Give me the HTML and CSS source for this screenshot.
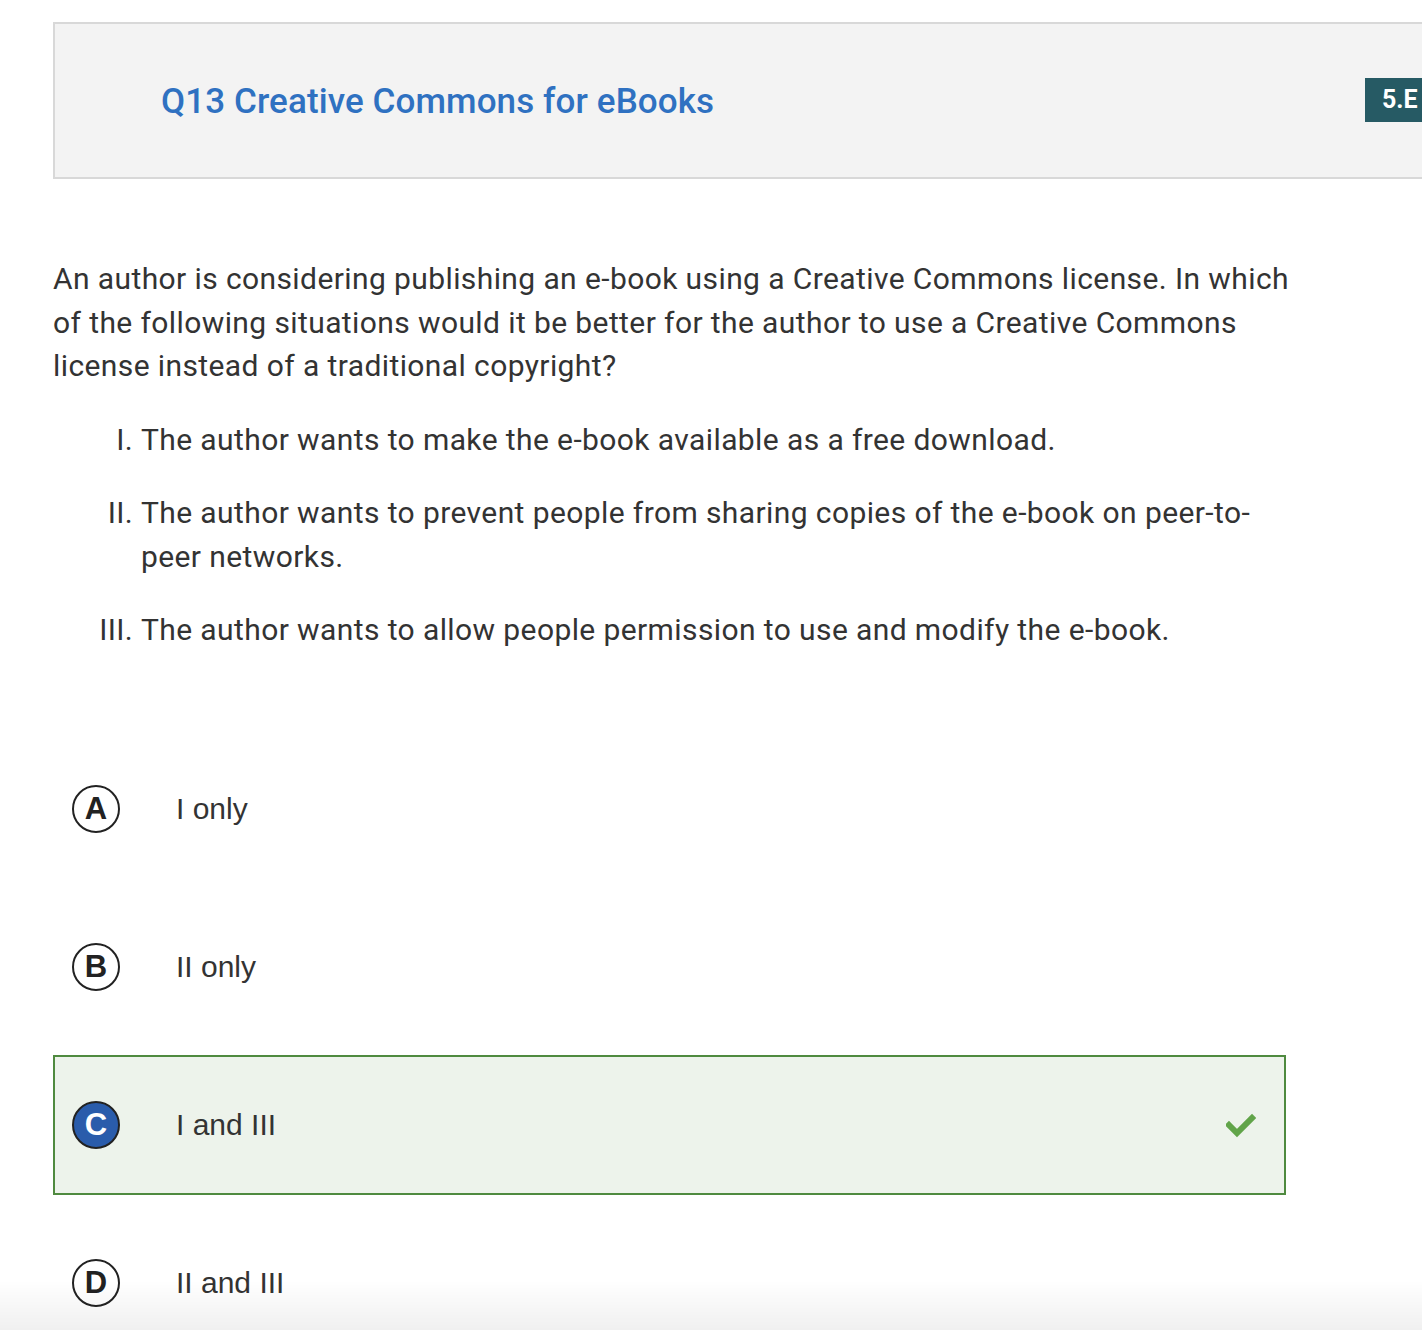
FILE: index.html
```html
<!DOCTYPE html>
<html>
<head>
<meta charset="utf-8">
<link rel="stylesheet" href="styles.css">
</head>
<body>
<div class="page">
  <div class="header">
    <h1 class="title">Q13 Creative Commons for eBooks</h1>
    <span class="badge">5.E</span>
  </div>
  <div class="content">
    <p class="question">An author is considering publishing an e-book using a Creative Commons license. In which of the following situations would it be better for the author to use a Creative Commons license instead of a traditional copyright?</p>
    <ol class="items">
      <li>The author wants to make the e-book available as a free download.</li>
      <li>The author wants to prevent people from sharing copies of the e-book on peer-to-peer networks.</li>
      <li>The author wants to allow people permission to use and modify the e-book.</li>
    </ol>
    <div class="options">
      <div class="option">
        <span class="letter">A</span>
        <span class="opt-text">I only</span>
      </div>
      <div class="option">
        <span class="letter">B</span>
        <span class="opt-text">II only</span>
      </div>
      <div class="option correct">
        <span class="letter filled">C</span>
        <span class="opt-text">I and III</span>
        <svg class="check" width="30" height="26" viewBox="0 0 30 26"><polyline points="3,13 11,21 26,6" fill="none" stroke="#61a449" stroke-width="6" stroke-linecap="square"/></svg>
      </div>
      <div class="option">
        <span class="letter">D</span>
        <span class="opt-text">II and III</span>
      </div>
    </div>
  </div>
</div>
<div class="bottom-fade"></div>
</body>
</html>
```

FILE: styles.css
```css
html, body {
  margin: 0;
  padding: 0;
  background: #ffffff;
  overflow: hidden;
}
body {
  width: 1422px;
  height: 1330px;
  font-family: Roboto, "Liberation Sans", sans-serif;
  color: #333333;
}
.page {
  padding: 22px 0 0 53px;
}
.header {
  width: 1400px;
  height: 153px;
  box-sizing: content-box;
  border: 2px solid #d8d8d8;
  background: #f3f3f3;
  display: flex;
  align-items: center;
  padding: 0;
}
.title {
  margin: 2px 0 0 106px;
  font-family: Roboto, sans-serif;
  font-weight: 500;
  font-size: 35px;
  color: #2f71c1;
  letter-spacing: 0.1px;
}
.badge {
  margin-left: auto;
  margin-right: 10px;
  width: 80px;
  height: 44px;
  margin-top: -2px;
  background: #265a64;
  color: #ffffff;
  font-family: Roboto, sans-serif;
  font-weight: 700;
  font-size: 25px;
  display: flex;
  align-items: center;
  padding-left: 17px;
  box-sizing: border-box;
}
.content {
  width: 1233px;
}
.question {
  width: 1245px;
  margin: 78px 0 0 0;
  font-size: 30px;
  letter-spacing: 0.4px;
  line-height: 43.5px;
}
.items {
  list-style: upper-roman;
  margin: 30px 0 0 0;
  padding-left: 88px;
  font-size: 30px;
  letter-spacing: 0.4px;
  line-height: 43.5px;
}
.items li {
  margin-bottom: 30px;
}
.items li:last-child {
  margin-bottom: 0;
}
.options {
  margin-top: 87px;
  display: flex;
  flex-direction: column;
  gap: 18px;
}
.option {
  height: 140px;
  box-sizing: border-box;
  border: 2px solid transparent;
  display: flex;
  align-items: center;
  padding-left: 17px;
  padding-right: 28px;
}
.option.correct {
  border-color: #4f8a3f;
  background: #edf3eb;
}
.letter {
  width: 48px;
  height: 48px;
  box-sizing: border-box;
  border: 2px solid #222222;
  border-radius: 50%;
  display: flex;
  align-items: center;
  justify-content: center;
  font-family: "Liberation Sans", Arial, sans-serif;
  font-weight: 700;
  font-size: 31px;
  color: #222222;
  flex-shrink: 0;
}
.letter.filled {
  background: #2a5cab;
  color: #ffffff;
}
.opt-text {
  margin-left: 56px;
  font-family: "Liberation Sans", Arial, sans-serif;
  font-size: 30px;
  color: #333333;
}
.check {
  margin-left: auto;
}
.bottom-fade {
  position: fixed;
  left: 0;
  right: 0;
  bottom: 0;
  height: 50px;
  background: linear-gradient(to bottom, rgba(0,0,0,0), rgba(0,0,0,0.06));
  pointer-events: none;
}
```
